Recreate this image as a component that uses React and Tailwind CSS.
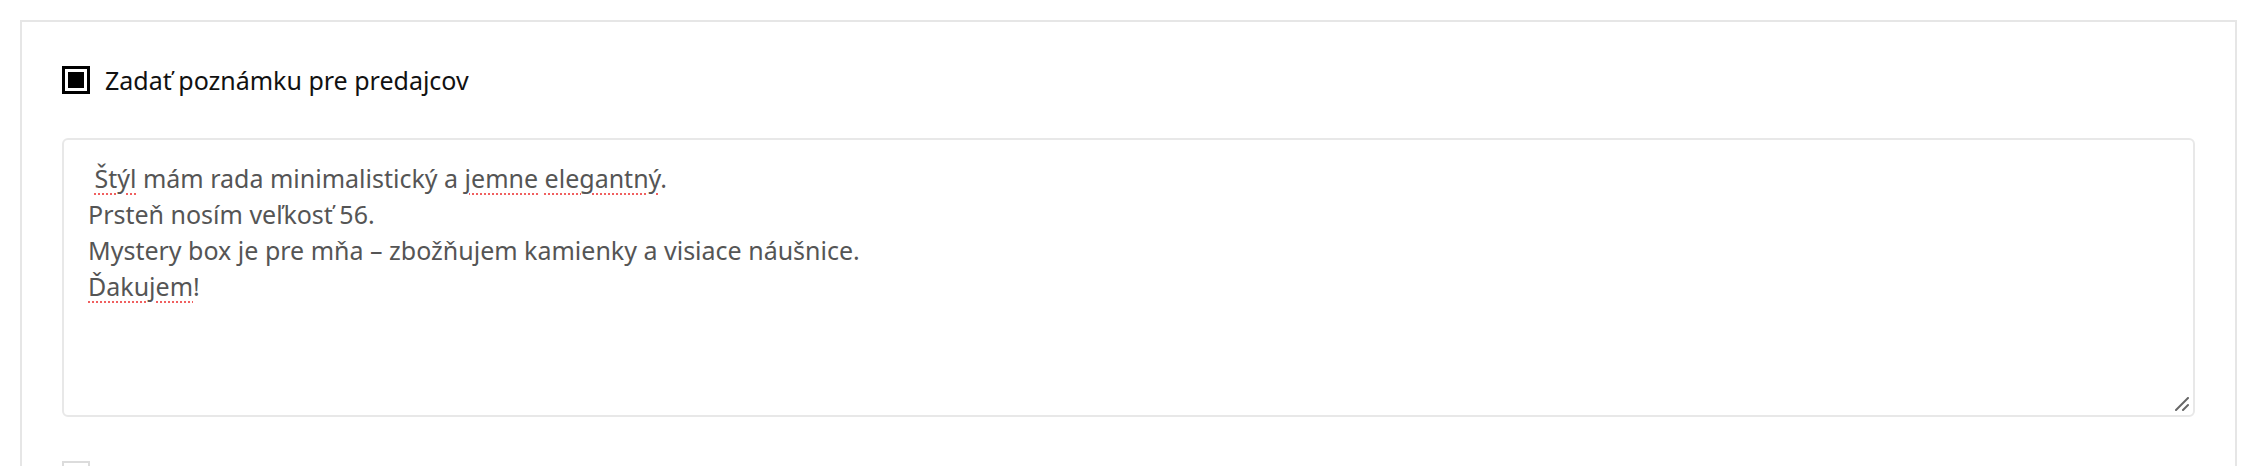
const Misspelled = ({ children }) => (
  <span className="underline decoration-dotted decoration-[#f06060] decoration-2 underline-offset-[5px]">
    {children}
  </span>
);

const App = () => {
  return (
    <div className="min-h-screen bg-white pt-5 pl-5 font-['Noto_Sans','Liberation_Sans',sans-serif]">
      <div className="w-[2217px] border-2 border-[#e6e6e6] px-10 pt-10 pb-10">
        <label className="flex items-center gap-[15px] text-[25px] leading-[36px] text-[#111]">
          <span className="flex h-[28px] w-[28px] items-center justify-center border-[3px] border-black p-[3px]">
            <span className="h-full w-full bg-black" />
          </span>
          <span>Zadať poznámku pre predajcov</span>
        </label>

        <div className="relative mt-10 h-[279px] whitespace-pre-wrap rounded-md border-2 border-[#e8e8e8] px-6 py-5 text-[25px] leading-[36px] text-[#555]">
          <div>
            {" "}
            <Misspelled>Štýl</Misspelled> mám rada minimalistický a <Misspelled>jemne</Misspelled>{" "}
            <Misspelled>elegantný</Misspelled>.
          </div>
          <div>Prsteň nosím veľkosť 56.</div>
          <div>Mystery box je pre mňa – zbožňujem kamienky a visiace náušnice.</div>
          <div>
            <Misspelled>Ďakujem</Misspelled>!
          </div>
          <svg className="absolute right-[4px] bottom-[4px]" width="14" height="14" viewBox="0 0 14 14">
            <line x1="1" y1="13" x2="13" y2="1" stroke="#666" strokeWidth="2" strokeLinecap="round" />
            <line x1="8" y1="13" x2="13" y2="8" stroke="#666" strokeWidth="2" strokeLinecap="round" />
          </svg>
        </div>

        <label className="mt-10 flex items-center gap-[18px] text-[25px] leading-[36px] text-[#111]">
          <span className="h-[28px] w-[28px] border-2 border-[#dcdcdc]" />
          <span>Chcem sa zaregistrovať</span>
        </label>
      </div>
    </div>
  );
};

export default App;
